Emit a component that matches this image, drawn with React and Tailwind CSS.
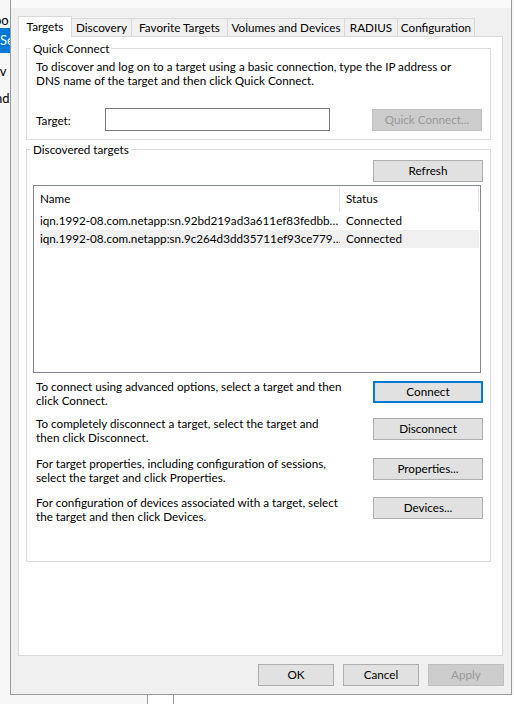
import React from 'react';

const tabs = [
  { label: 'Targets', w: 'w-[54px]', active: true },
  { label: 'Discovery', w: 'w-[60px]' },
  { label: 'Favorite Targets', w: 'w-[96px]' },
  { label: 'Volumes and Devices', w: 'w-[117px]' },
  { label: 'RADIUS', w: 'w-[53px]' },
  { label: 'Configuration', w: 'w-[77px]' },
];

const targets = [
  { name: 'iqn.1992-08.com.netapp:sn.92bd219ad3a611ef83fedbb…', status: 'Connected' },
  { name: 'iqn.1992-08.com.netapp:sn.9c264d3dd35711ef93ce779…', status: 'Connected', hover: true },
];

const actions = [
  { lines: ['To connect using advanced options, select a target and then', 'click Connect.'], button: 'Connect', h: 'h-[37px]', focus: true },
  { lines: ['To completely disconnect a target, select the target and', 'then click Disconnect.'], button: 'Disconnect', h: 'h-[40px]' },
  { lines: ['For target properties, including configuration of sessions,', 'select the target and click Properties.'], button: 'Properties...', h: 'h-[39px]' },
  { lines: ['For configuration of devices associated with a target, select', 'the target and then click Devices.'], button: 'Devices...', h: 'h-[30px]' },
];

function Button({ children, disabled, focus, className = '' }) {
  let look = 'bg-[#e1e1e1] border border-[#adadad] text-black';
  if (disabled) look = 'bg-[#cccccc] border border-[#bfbfbf] text-[#9a9a9a]';
  if (focus) look = 'bg-[#e1e1e1] border-2 border-[#0078d7] text-black';
  return (
    <div className={`flex items-center justify-center h-[22px] leading-none whitespace-nowrap ${look} ${className}`}>
      {children}
    </div>
  );
}

function Tabs() {
  return (
    <div className="flex items-end h-[20px] ml-[7px] mt-[8px] whitespace-nowrap">
      {tabs.map((t) =>
        t.active ? (
          <div
            key={t.label}
            className={`${t.w} h-[21px] relative z-10 -mb-px bg-white border border-b-0 border-[#d9d9d9] flex items-center justify-center pb-[1px]`}
          >
            {t.label}
          </div>
        ) : (
          <div
            key={t.label}
            className={`${t.w} h-[18px] bg-[#f0f0f0] border-t border-r border-[#d9d9d9] flex items-center justify-center`}
          >
            {t.label}
          </div>
        )
      )}
    </div>
  );
}

function QuickConnect() {
  return (
    <fieldset className="ml-[7px] mt-[3px] w-[465px] border border-[#dcdcdc] pb-[8px]">
      <legend className="ml-[4px] px-[2px] leading-[16px]">Quick Connect</legend>
      <div className="px-[9px] pt-[3px] leading-[14px] whitespace-nowrap">
        To discover and log on to a target using a basic connection, type the IP address or
        <br />
        DNS name of the target and then click Quick Connect.
      </div>
      <div className="flex items-center mt-[21px] pl-[9px]">
        <span className="w-[69px] pt-[2px]">Target:</span>
        <div className="w-[225px] h-[23px] bg-white border border-[#7a7a7a]" />
        <Button disabled className="w-[110px] ml-[42px] mt-px">Quick Connect...</Button>
      </div>
    </fieldset>
  );
}

function TargetList() {
  return (
    <div className="ml-[6px] mt-[3px] w-[448px] h-[188px] bg-white border border-[#828790] pl-[6px] pr-px">
      <div className="flex h-[26px] items-center">
        <div className="w-[300px] h-full flex items-center border-r border-[#e5e5e5]">Name</div>
        <div className="flex-1 h-full flex items-center pl-[6px] border-r border-[#e5e5e5]">Status</div>
      </div>
      {targets.map((t) => (
        <div key={t.name} className={`flex h-[18px] items-center ${t.hover ? 'bg-[#f0f0f0]' : ''}`}>
          <div className="w-[300px] whitespace-nowrap overflow-hidden">{t.name}</div>
          <div className="pl-[6px]">{t.status}</div>
        </div>
      ))}
    </div>
  );
}

function DiscoveredTargets() {
  return (
    <fieldset className="ml-[7px] mt-[1px] w-[465px] h-[421px] border border-[#dcdcdc]">
      <legend className="ml-[4px] px-[2px] leading-[16px]">Discovered targets</legend>
      <div className="flex justify-end pr-[7px] mt-[3px]">
        <Button className="w-[110px]">Refresh</Button>
      </div>
      <TargetList />
      <div className="mt-[6px]">
        {actions.map((a) => (
          <div key={a.button} className={`flex justify-between pl-[9px] pr-[7px] ${a.h}`}>
            <div className="leading-[14px] whitespace-nowrap">
              {a.lines[0]}
              <br />
              {a.lines[1]}
            </div>
            <Button focus={a.focus} className="w-[110px] mt-[2px]">{a.button}</Button>
          </div>
        ))}
      </div>
    </fieldset>
  );
}

export default function App() {
  return (
    <div className="w-[514px] h-[704px] overflow-hidden bg-[#f7f7f7] text-[11.7px] text-black font-['Lato',sans-serif]">
      <div className="flex h-[695px]">
        {/* edge of the window underneath */}
        <div className="w-[10px] shrink-0 overflow-hidden bg-[#f7f7f7] text-[13px] leading-none whitespace-nowrap">
          <div className="h-[14px]" />
          <div className="h-[14px] -ml-[6px]">oo</div>
          <div className="h-[25px] bg-[#0078d7] text-white flex items-center">Se</div>
          <div className="h-[12px]" />
          <div className="h-[14px] -ml-[5px]">rv</div>
          <div className="h-[13px]" />
          <div className="h-[14px] -ml-[5px]">nd</div>
        </div>

        <div className="w-[502px] shrink-0 bg-[#f0f0f0] border-l border-r border-b border-[#9a9a9a] flex flex-col">
          <div className="h-[8px] bg-[#fafafa]" />
          <Tabs />
          <div className="ml-[7px] w-[485px] h-[620px] bg-white border border-[#d9d9d9]">
            <QuickConnect />
            <DiscoveredTargets />
          </div>
          <div className="flex justify-end gap-[9px] pr-[7px] mt-[8px]">
            <Button className="w-[76px]">OK</Button>
            <Button className="w-[76px]">Cancel</Button>
            <Button disabled className="w-[76px]">Apply</Button>
          </div>
        </div>

        <div className="w-[2px] shrink-0 bg-[#f7f7f7]" />
      </div>
      <div className="flex h-[9px]">
        <div className="w-[147px]" />
        <div className="w-px bg-[#a0a0a0]" />
        <div className="w-[25px] bg-white" />
        <div className="w-px bg-[#a0a0a0]" />
        <div className="flex-1 bg-white" />
      </div>
    </div>
  );
}
